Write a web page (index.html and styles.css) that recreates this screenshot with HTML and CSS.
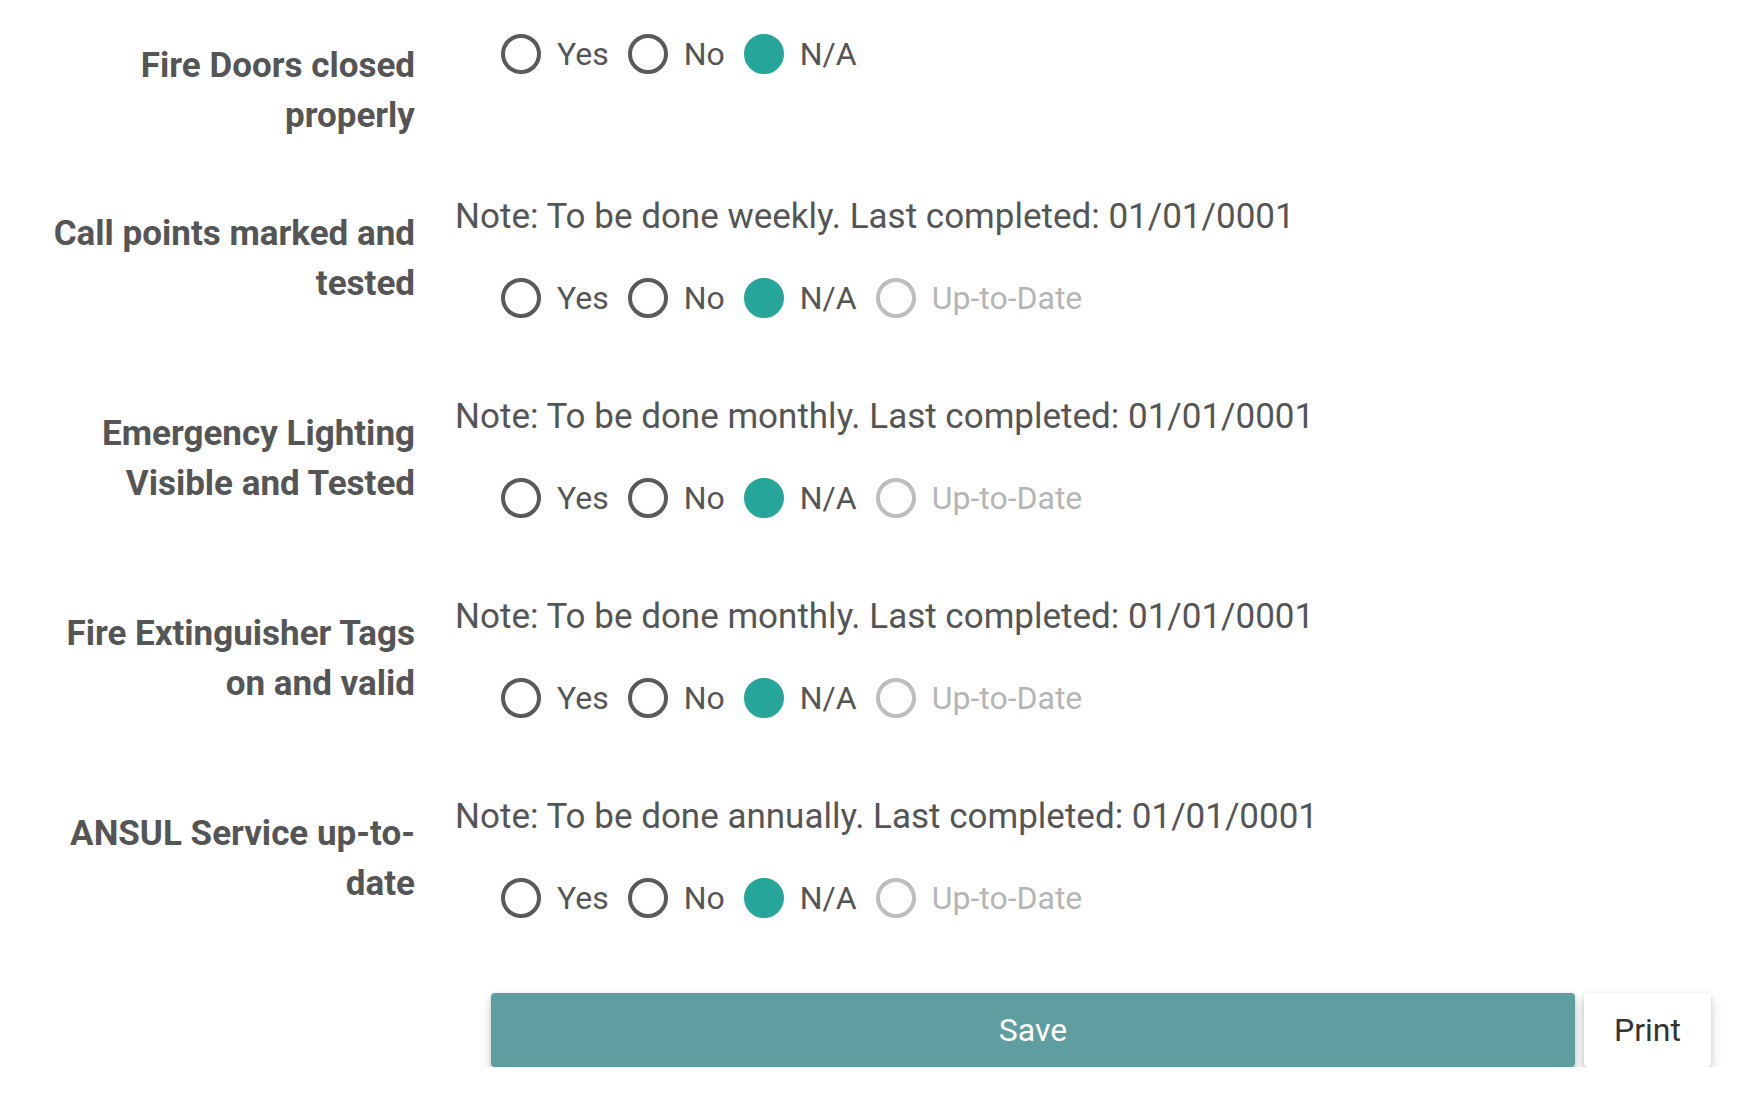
FILE: index.html
```html
<!DOCTYPE html>
<html lang="en">
<head>
<meta charset="utf-8">
<title>Checklist</title>
<link rel="stylesheet" href="styles.css">
</head>
<body>
<form class="checklist">
  <div class="field field--first">
    <div class="field-label">Fire Doors closed properly</div>
    <div class="field-body">
      <div class="radios">
        <label class="radio"><span class="dot"></span><span class="txt">Yes</span></label>
        <label class="radio"><span class="dot"></span><span class="txt">No</span></label>
        <label class="radio is-checked"><span class="dot"></span><span class="txt">N/A</span></label>
      </div>
    </div>
  </div>

  <div class="field">
    <div class="field-label">Call points marked and tested</div>
    <div class="field-body">
      <p class="note">Note: To be done weekly. Last completed: 01/01/0001</p>
      <div class="radios">
        <label class="radio"><span class="dot"></span><span class="txt">Yes</span></label>
        <label class="radio"><span class="dot"></span><span class="txt">No</span></label>
        <label class="radio is-checked"><span class="dot"></span><span class="txt">N/A</span></label>
        <label class="radio is-disabled"><span class="dot"></span><span class="txt">Up-to-Date</span></label>
      </div>
    </div>
  </div>

  <div class="field">
    <div class="field-label">Emergency Lighting Visible and Tested</div>
    <div class="field-body">
      <p class="note">Note: To be done monthly. Last completed: 01/01/0001</p>
      <div class="radios">
        <label class="radio"><span class="dot"></span><span class="txt">Yes</span></label>
        <label class="radio"><span class="dot"></span><span class="txt">No</span></label>
        <label class="radio is-checked"><span class="dot"></span><span class="txt">N/A</span></label>
        <label class="radio is-disabled"><span class="dot"></span><span class="txt">Up-to-Date</span></label>
      </div>
    </div>
  </div>

  <div class="field">
    <div class="field-label">Fire Extinguisher Tags on and valid</div>
    <div class="field-body">
      <p class="note">Note: To be done monthly. Last completed: 01/01/0001</p>
      <div class="radios">
        <label class="radio"><span class="dot"></span><span class="txt">Yes</span></label>
        <label class="radio"><span class="dot"></span><span class="txt">No</span></label>
        <label class="radio is-checked"><span class="dot"></span><span class="txt">N/A</span></label>
        <label class="radio is-disabled"><span class="dot"></span><span class="txt">Up-to-Date</span></label>
      </div>
    </div>
  </div>

  <div class="field">
    <div class="field-label">ANSUL Service up-to-date</div>
    <div class="field-body">
      <p class="note">Note: To be done annually. Last completed: 01/01/0001</p>
      <div class="radios">
        <label class="radio"><span class="dot"></span><span class="txt">Yes</span></label>
        <label class="radio"><span class="dot"></span><span class="txt">No</span></label>
        <label class="radio is-checked"><span class="dot"></span><span class="txt">N/A</span></label>
        <label class="radio is-disabled"><span class="dot"></span><span class="txt">Up-to-Date</span></label>
      </div>
    </div>
  </div>

  <div class="actions">
    <button type="button" class="btn btn-save">Save</button>
    <button type="button" class="btn btn-print">Print</button>
  </div>
</form>
</body>
</html>
```

FILE: styles.css
```css
html, body {
  margin: 0;
  padding: 0;
  background: #ffffff;
}

body {
  font-family: Roboto, "Liberation Sans", Arial, sans-serif;
  color: #555555;
}

.checklist {
  padding: 24px 50px 0 0;
}

.field {
  display: grid;
  grid-template-columns: 415px 1fr;
  column-gap: 40px;
  align-items: start;
  margin-bottom: 74px;
}

.field--first {
  margin-bottom: 51px;
}

.field-label {
  font-weight: 700;
  font-size: 35px;
  line-height: 50px;
  text-align: right;
  padding: 17px 0 0 42px;
  color: #555555;
}

.field-body {
  display: flex;
  flex-direction: column;
}

.note {
  margin: 0;
  font-size: 35px;
  line-height: 50px;
  color: #555555;
}

.radios {
  display: flex;
  align-items: center;
  gap: 19px;
  margin-top: 36px;
  margin-left: 46px;
  height: 40px;
}

.field--first .radios {
  margin-top: 10px;
}

.radio {
  display: flex;
  align-items: center;
  gap: 16px;
  font-size: 32px;
  line-height: 40px;
  color: #555555;
}

.dot {
  box-sizing: border-box;
  width: 40px;
  height: 40px;
  border-radius: 50%;
  border: 4.5px solid #5a5a5a;
  flex: none;
}

.is-checked .dot {
  border-color: #26a69a;
  background: #26a69a;
}

.is-disabled .dot {
  border-color: #bdbdbd;
}

.is-disabled .txt {
  color: #b5b5b5;
}

.actions {
  display: flex;
  gap: 9px;
  margin: 75px 0 0 491px;
}

.btn {
  height: 74px;
  border: none;
  border-radius: 4px;
  font-family: Roboto, "Liberation Sans", Arial, sans-serif;
  font-size: 32px;
  cursor: pointer;
  box-shadow: 0 6px 12px rgba(0, 0, 0, 0.18), 0 1px 4px rgba(0, 0, 0, 0.12);
}

.btn-save {
  flex: 1;
  background: #5f9ea0;
  color: #ffffff;
}

.btn-print {
  width: 127px;
  background: #ffffff;
  color: #333333;
}
```
